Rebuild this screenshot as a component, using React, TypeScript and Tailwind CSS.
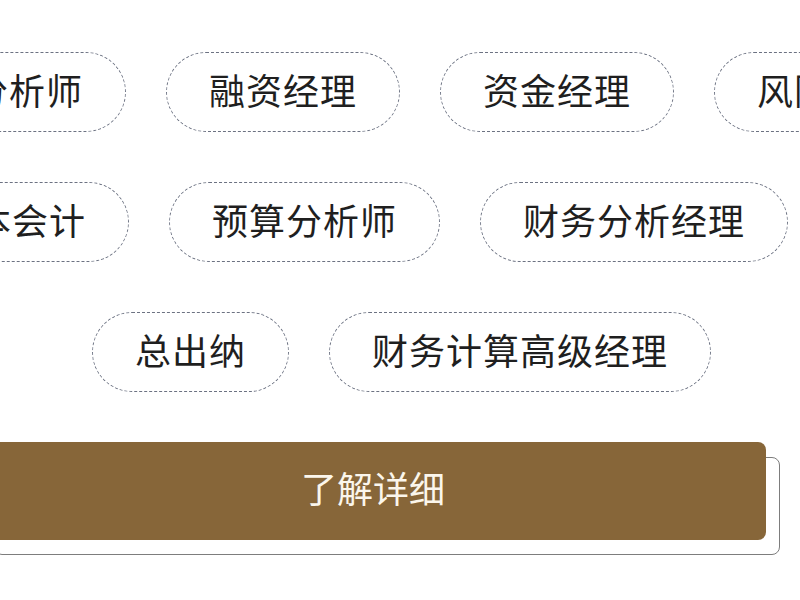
import React from 'react';

const rows: { offset: string; tags: string[] }[] = [
  { offset: 'ml-[-145px]', tags: ['财务分析师', '融资经理', '资金经理', '风险经理'] },
  { offset: 'ml-[-105px]', tags: ['成本会计', '预算分析师', '财务分析经理', '审计经理'] },
  { offset: 'ml-[92px]', tags: ['总出纳', '财务计算高级经理'] },
];

const Tag = ({ label }: { label: string }) => (
  <span className="shrink-0 h-20 px-[42px] pb-1.5 flex items-center rounded-full border border-dashed border-[#6c7282] text-[36px] tracking-[1px] leading-none text-[#1f1f1f] whitespace-nowrap">
    {label}
  </span>
);

export default function App() {
  return (
    <div
      className="w-[800px] h-[600px] overflow-hidden bg-white pt-[52px]"
      style={{ fontFamily: '"Noto Sans CJK SC", "Noto Sans", sans-serif' }}
    >
      <div className="flex flex-col gap-[50px]">
        {rows.map((row) => (
          <div key={row.tags[0]} className={`flex gap-10 ${row.offset}`}>
            {row.tags.map((t) => (
              <Tag key={t} label={t} />
            ))}
          </div>
        ))}
        <div className="relative ml-[-20px] w-[786px] h-[98px]">
          <div className="absolute left-[14px] top-[15px] w-[786px] h-[98px] rounded-lg border border-[#7d7d7d]" />
          <button className="relative w-full h-full pb-2 rounded-lg bg-[#876639] text-[36px] text-[#fbf6ec] leading-none">
            了解详细
          </button>
        </div>
      </div>
    </div>
  );
}
